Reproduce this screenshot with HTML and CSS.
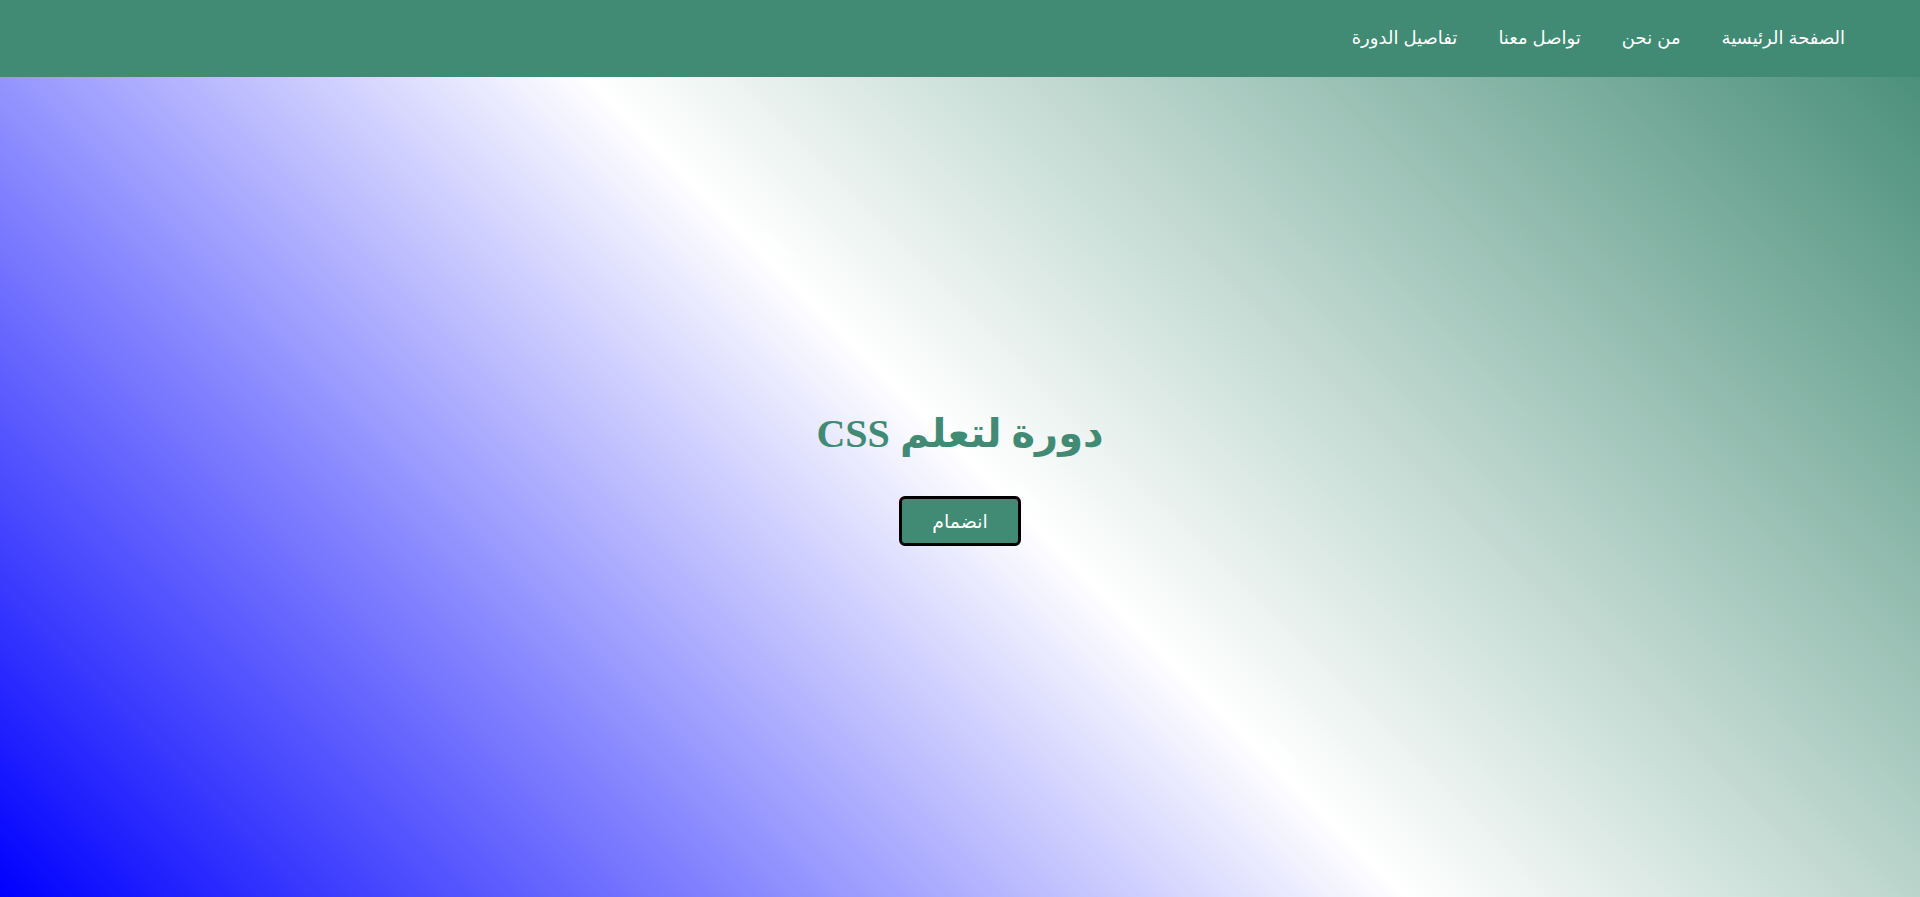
FILE: index.html
```html
<!DOCTYPE html>
<html lang="ar" dir="rtl">
<head>
<meta charset="utf-8">
<title>دورة لتعلم CSS</title>
<link rel="stylesheet" href="styles.css">
</head>
<body>
<header class="navbar">
  <ul class="nav-list">
    <li><a href="#">الصفحة الرئيسية</a></li>
    <li><a href="#">من نحن</a></li>
    <li><a href="#">تواصل معنا</a></li>
    <li><a href="#">تفاصيل الدورة</a></li>
  </ul>
</header>
<main class="hero">
  <h1 class="hero-title">دورة لتعلم CSS</h1>
  <button class="join-btn" type="button">انضمام</button>
</main>
</body>
</html>
```
FILE: styles.css
```css
* { box-sizing: border-box; }
html, body { margin: 0; padding: 0; height: 100%; }
body {
  font-family: "Liberation Sans", Arial, "DejaVu Sans", sans-serif;
  background: linear-gradient(45deg, #0000ff 0%, #ffffff 50%, #418a73 100%);
  min-height: 100vh;
  overflow: hidden;
}
.navbar {
  height: 77px;
  background: #418a73;
  display: flex;
  align-items: center;
  padding-right: 75px;
  padding-bottom: 1px;
}
.nav-list {
  list-style: none;
  margin: 0;
  padding: 0;
  display: flex;
  gap: 41px;
}
.nav-list a {
  color: #ffffff;
  text-decoration: none;
  font-size: 18px;
}
.hero {
  display: flex;
  flex-direction: column;
  align-items: center;
  padding-top: 334px;
}
.hero-title {
  margin: 0;
  font-family: "Liberation Serif", "Times New Roman", "DejaVu Sans", serif;
  font-size: 40px;
  line-height: 46px;
  font-weight: bold;
  color: #418a73;
}
.join-btn {
  margin-top: 39px;
  width: 122px;
  height: 50px;
  background: #418a73;
  color: #ffffff;
  border: 3px solid #000000;
  border-radius: 6px;
  font-family: "Liberation Sans", Arial, "DejaVu Sans", sans-serif;
  font-size: 19px;
  cursor: pointer;
}
```
